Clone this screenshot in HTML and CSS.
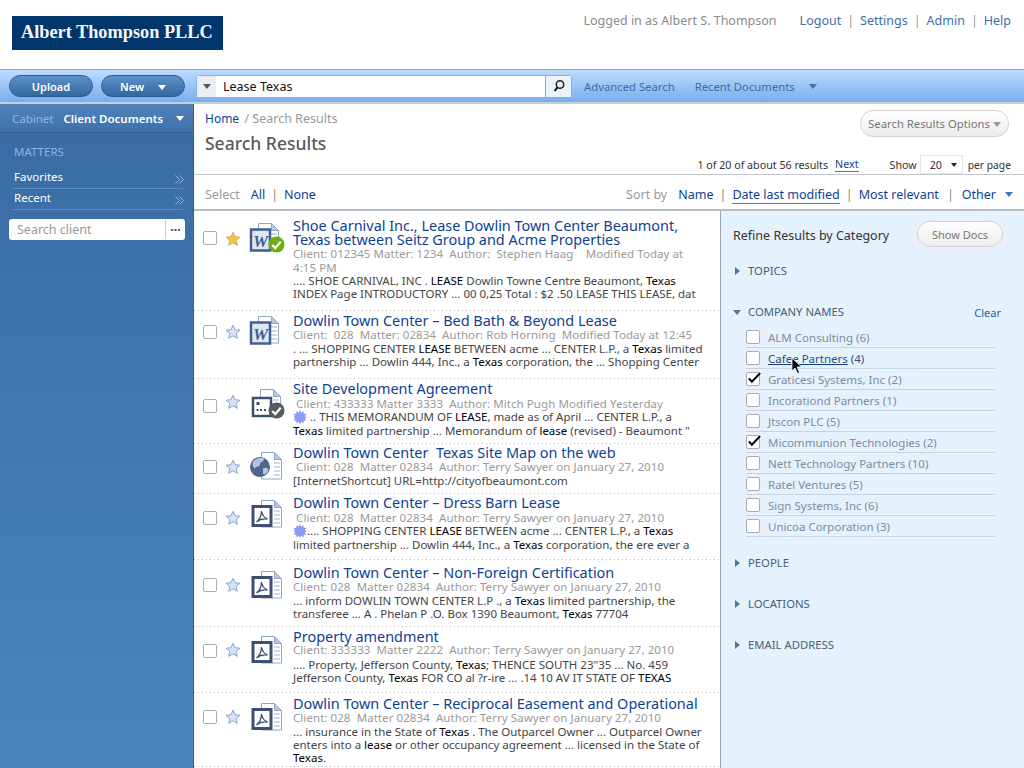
FILE: index.html
```html
<!DOCTYPE html>
<html lang="en">
<head>
<meta charset="utf-8">
<title>Search Results</title>
<link rel="stylesheet" href="styles.css">
</head>
<body>
<svg class="defs" width="0" height="0" aria-hidden="true">
  <defs>
    <symbol id="star" viewBox="0 0 16 16"><path d="M8 1.2l2 4.500 4.900.5-3.700 3.300 1.100 4.800L8 11.800l-4.300 2.500 1.100-4.800L1.100 6.200l4.900-.5z"/></symbol>
    <g id="sheet"><path d="M9.500 1.500h13l7 7v19.500h-20z" fill="#fff" stroke="#8ea8cc"/><path d="M22.500 1.500v7h7z" fill="#b9c8de" stroke="#8ea8cc"/><path d="M22 12h6M22 16h6M22 20h6M22 24h6" stroke="#9db4d4"/></g>
    <symbol id="word" viewBox="0 0 36 36"><use href="#sheet"/><rect x="2" y="7.500" width="19" height="21" fill="#dfe7f3" stroke="#3f5f92" stroke-width="2.500"/><text x="11.500" y="24.500" text-anchor="middle" class="w-letter">W</text></symbol>
    <symbol id="pdf" viewBox="0 0 36 36"><use href="#sheet" x="3"/><rect x="4" y="7.500" width="18" height="19" fill="#fff" stroke="#3d5070" stroke-width="3"/><path d="M7.500 23c2.500-2 5-6.500 5-11 .5 4 2.500 6.500 6 8-4-.5-8 .5-11 3z" fill="none" stroke="#3d5070" stroke-width="1.300"/></symbol>
    <symbol id="app" viewBox="0 0 36 36"><use href="#sheet" x="2"/><rect x="4" y="10" width="18" height="18" fill="#fff" stroke="#3d5070" stroke-width="2.500"/><path d="M7.500 14h3v3h-3zM7.500 21h2v2h-2zM11 21h2v2h-2zM15 21h2v2h-2z" fill="#3d5070"/></symbol>
    <symbol id="web" viewBox="0 0 36 36"><use href="#sheet" x="3"/><circle cx="11" cy="16" r="10" fill="#4d668d"/><path d="M4 10.500c3-3 8-5 11-3 1 3-4 3-4 6 0 3-4 1-5 4-2 0-3-4-2-7zM14 17.500c4-2 6 0 5 3-1 2-4 4-5 2z" fill="#b6c4d8"/></symbol>
    <symbol id="tick" viewBox="0 0 18 18"><circle cx="9" cy="9" r="8.500"/><path d="M4.500 9.500l3.200 3.200 5.800-6.500" fill="none" stroke="#fff" stroke-width="2.400"/></symbol>
    <symbol id="burst" viewBox="0 0 14 14"><path d="M7 0l1.300 2.700L10.500 1l.2 2.800 2.800.2-1.700 2.200L14 7l-2.200 1.300 1.700 2.200-2.800.2-.2 2.800-2.200-1.700L7 14l-1.300-2.200-2.200 1.700-.2-2.800-2.800-.2 1.700-2.200L0 7l2.200-.8L.5 4l2.800-.2.2-2.800 2.200 1.700z"/></symbol>
    <symbol id="check" viewBox="0 0 18 16"><path d="M1.500 8.500l4 4.500L16.500 1.500" fill="none" stroke="#000" stroke-width="2.800"/></symbol>
    <symbol id="dbl" viewBox="0 0 9 9"><path d="M.5 .5l4 4-4 4M4.500 .5l4 4-4 4" fill="none" stroke="#8fb6e6"/></symbol>
  </defs>
</svg>

<header class="masthead">
  <div class="logo">Albert Thompson PLLC</div>
  <nav class="usernav">
    <span class="who">Logged in as Albert S. Thompson</span>
    <a>Logout</a><i>|</i><a>Settings</a><i>|</i><a>Admin</a><i>|</i><a>Help</a>
  </nav>
</header>

<div class="toolbar">
  <button class="pill pill-upload">Upload</button>
  <button class="pill pill-new">New <b class="tri tri-white"></b></button>
  <div class="searchbox">
    <span class="sb-drop"><b class="tri tri-dark"></b></span>
    <span class="sb-text">Lease Texas</span>
    <span class="sb-go"><svg width="14" height="14" viewBox="0 0 14 14"><circle cx="8" cy="5.500" r="3.700" fill="none" stroke="#222" stroke-width="1.500"/><path d="M5.500 8.500L2.500 12" stroke="#222" stroke-width="2"/></svg></span>
  </div>
  <a class="tool-link tl-adv">Advanced Search</a>
  <a class="tool-link tl-rec">Recent Documents</a>
  <b class="tri tri-blue"></b>
</div>

<div class="body">
  <aside class="sidebar">
    <div class="cabinet"><span class="cab-l">Cabinet</span><span class="cab-v">Client Documents</span><b class="tri tri-white"></b></div>
    <h2 class="matters">MATTERS</h2>
    <div class="side-item"><span>Favorites</span><svg class="dbl"><use href="#dbl"/></svg></div>
    <div class="side-item"><span>Recent</span><svg class="dbl"><use href="#dbl"/></svg></div>
    <div class="client-search"><span class="cs-text">Search client</span><span class="cs-more">...</span></div>
  </aside>

  <main class="content">
    <div class="crumbs-area">
      <div class="crumb-col">
        <div class="crumbs"><a>Home</a> <span>/ Search Results</span></div>
        <h1>Search Results</h1>
      </div>
      <button class="ghost opts">Search Results Options <b class="tri tri-grey"></b></button>
      <div class="pager">
        <span>1 of 20 of about 56 results</span><a>Next</a>
        <span class="show">Show</span><span class="sel">20 <b class="tri tri-black"></b></span><span class="perpage">per page</span>
      </div>
    </div>
    <div class="sortbar">
      <span class="lbl">Select</span><a class="all">All</a><i>|</i><a>None</a>
      <span class="lbl sort-lbl">Sort by</span><a>Name</a><i>|</i><a class="cur">Date last modified</a><i>|</i><a>Most relevant</a><i class="wide">|</i><a>Other</a><b class="tri tri-blue"></b>
    </div>

    <div class="split">
      <section class="results">
        <article class="row r1">
          <span class="cb"></span><svg class="star gold"><use href="#star"/></svg>
          <span class="ico"><svg class="doc"><use href="#word"/></svg><svg class="badge green"><use href="#tick"/></svg></span>
          <div class="txt"><h3>Shoe Carnival Inc., Lease Dowlin Town Center Beaumont,<br>Texas between Seitz Group and Acme Properties</h3><p class="meta">Client: 012345 Matter: 1234  Author:  Stephen Haag    Modified Today at<br>4:15 PM</p><p class="snip">.... SHOE CARNIVAL, INC . <b>LEASE</b> Dowlin Towne Centre Beaumont, <b>Texas</b><br>INDEX Page INTRODUCTORY ... 00 0,25 Total : $2 .50 LEASE THIS LEASE, dat</p></div>
        </article>
        <article class="row r2">
          <span class="cb"></span><svg class="star"><use href="#star"/></svg>
          <span class="ico"><svg class="doc"><use href="#word"/></svg></span>
          <div class="txt"><h3>Dowlin Town Center – Bed Bath &amp; Beyond Lease</h3><p class="meta">Client:  028  Matter: 02834  Author: Rob Horning  Modified Today at 12:45</p><p class="snip">. ... SHOPPING CENTER <b>LEASE</b> BETWEEN acme ... CENTER L.P., a <b>Texas</b> limited<br>partnership ... Dowlin 444, Inc., a <b>Texas</b> corporation, the ... Shopping Center</p></div>
        </article>
        <article class="row r3">
          <span class="cb"></span><svg class="star"><use href="#star"/></svg>
          <span class="ico"><svg class="doc"><use href="#app"/></svg><svg class="badge grey"><use href="#tick"/></svg></span>
          <div class="txt"><h3>Site Development Agreement</h3><p class="meta low"> Client: 433333 Matter 3333  Author: Mitch Pugh Modified Yesterday</p><p class="snip"><svg class="burst"><use href="#burst"/></svg> .. THIS MEMORANDUM OF <b>LEASE</b>, made as of April ... CENTER L.P., a<br><b>Texas</b> limited partnership ... Memorandum of <b>lease</b> (revised) - Beaumont "</p></div>
        </article>
        <article class="row r4">
          <span class="cb"></span><svg class="star"><use href="#star"/></svg>
          <span class="ico"><svg class="doc"><use href="#web"/></svg></span>
          <div class="txt"><h3>Dowlin Town Center  Texas Site Map on the web</h3><p class="meta"> Client: 028  Matter 02834  Author: Terry Sawyer on January 27, 2010</p><p class="snip">[InternetShortcut] URL=http://cityofbeaumont.com</p></div>
        </article>
        <article class="row r5">
          <span class="cb"></span><svg class="star"><use href="#star"/></svg>
          <span class="ico"><svg class="doc"><use href="#pdf"/></svg></span>
          <div class="txt"><h3>Dowlin Town Center – Dress Barn Lease</h3><p class="meta low"> Client: 028  Matter 02834  Author: Terry Sawyer on January 27, 2010</p><p class="snip"><svg class="burst"><use href="#burst"/></svg>.... SHOPPING CENTER <b>LEASE</b> BETWEEN acme ... CENTER L.P., a <b>Texas</b><br>limited partnership ... Dowlin 444, Inc., a <b>Texas</b> corporation, the ere ever a</p></div>
        </article>
        <article class="row r6">
          <span class="cb"></span><svg class="star"><use href="#star"/></svg>
          <span class="ico"><svg class="doc"><use href="#pdf"/></svg></span>
          <div class="txt"><h3>Dowlin Town Center – Non-Foreign Certification</h3><p class="meta">Client: 028  Matter 02834  Author: Terry Sawyer on January 27, 2010</p><p class="snip">... inform DOWLIN TOWN CENTER L.P ., a <b>Texas</b> limited partnership, the<br>transferee ... A . Phelan P .O. Box 1390 Beaumont, <b>Texas</b> 77704</p></div>
        </article>
        <article class="row r7">
          <span class="cb"></span><svg class="star"><use href="#star"/></svg>
          <span class="ico"><svg class="doc"><use href="#pdf"/></svg></span>
          <div class="txt"><h3>Property amendment</h3><p class="meta high">Client: 333333  Matter 2222  Author: Terry Sawyer on January 27, 2010</p><p class="snip">.... Property, Jefferson County, <b>Texas</b>; THENCE SOUTH 23"35 ... No. 459<br>Jefferson County, <b>Texas</b> FOR CO al ?r-ire ... .14 10 AV IT STATE OF <b>TEXAS</b></p></div>
        </article>
        <article class="row r8">
          <span class="cb"></span><svg class="star"><use href="#star"/></svg>
          <span class="ico"><svg class="doc"><use href="#pdf"/></svg></span>
          <div class="txt"><h3>Dowlin Town Center – Reciprocal Easement and Operational</h3><p class="meta">Client: 028  Matter 02834  Author: Terry Sawyer on January 27, 2010</p><p class="snip">... insurance in the State of <b>Texas</b> . The Outparcel Owner ... Outparcel Owner<br>enters into a <b>lease</b> or other occupancy agreement ... licensed in the State of<br><b>Texas</b>.</p></div>
        </article>
      </section>

      <aside class="refine">
        <div class="refine-head"><span>Refine Results by Category</span><button class="ghost docs">Show Docs</button></div>
        <div class="facet f-topics"><b class="tri-r"></b>TOPICS</div>
        <div class="facet f-company"><b class="tri tri-slate"></b>COMPANY NAMES<a>Clear</a></div>
        <ul class="facets">
          <li><span class="cb"></span>ALM Consulting (6)</li>
          <li class="hover"><span class="cb"></span><u>Cafee Partners</u> (4)</li>
          <li><span class="cb"><svg class="chk"><use href="#check"/></svg></span>Graticesi Systems, Inc (2)</li>
          <li><span class="cb"></span>Incorationd Partners (1)</li>
          <li><span class="cb"></span>Jtscon PLC (5)</li>
          <li><span class="cb"><svg class="chk"><use href="#check"/></svg></span>Micommunion Technologies (2)</li>
          <li><span class="cb"></span>Nett Technology Partners (10)</li>
          <li><span class="cb"></span>Ratel Ventures (5)</li>
          <li><span class="cb"></span>Sign Systems, Inc (6)</li>
          <li><span class="cb"></span>Unicoa Corporation (3)</li>
        </ul>
        <div class="facet f-people"><b class="tri-r"></b>PEOPLE</div>
        <div class="facet f-more"><b class="tri-r"></b>LOCATIONS</div>
        <div class="facet f-more"><b class="tri-r"></b>EMAIL ADDRESS</div>
      </aside>
    </div>
  </main>
</div>
<svg class="cursor" width="12" height="18" viewBox="0 0 12 18"><path d="M1 1v13l3-3 2.500 5.500 2-1L6 10h4.500z" fill="#000" stroke="#fff" stroke-width=".8"/></svg>
</body>
</html>
```
FILE: styles.css
```css
* { box-sizing: border-box; }
html, body { margin: 0; height: 768px; overflow: hidden; background: #fff; }
body { font-family: "Noto Sans", "DejaVu Sans", sans-serif; font-size: 12px; color: #444; position: relative; }
.defs { position: absolute; }
h1, h2, h3, p, ul { margin: 0; padding: 0; }
i { font-style: normal; }
button { font-family: inherit; padding: 0; }

.tri { display: inline-block; width: 0; height: 0; border-left: 4.500px solid transparent; border-right: 4.500px solid transparent; border-top: 5px solid #fff; vertical-align: middle; }
.tri-white { border-top-color: #fff; }
.tri-dark { border-top-color: #555; }
.tri-blue { border-top-color: #3f73b5; }
.tri-grey { border-top-color: #999; }
.tri-black { border-top-color: #222; border-left-width: 3.500px; border-right-width: 3.500px; border-top-width: 4px; }
.tri-slate { border-top-color: #5b7290; }
.tri-r { display: inline-block; width: 0; height: 0; border-top: 4.500px solid transparent; border-bottom: 4.500px solid transparent; border-left: 5px solid #5b7290; }

.masthead { height: 69px; display: flex; justify-content: space-between; padding: 16px 13px 0 12px; }
.logo { width: 211px; height: 34px; background: #00366b; color: #f4f6f8; font: bold 18.300px/33px "Liberation Serif", serif; padding-left: 9px; white-space: nowrap; }
.usernav { font-size: 12.500px; line-height: 10px; color: #888; display: flex; gap: 6px; }
.usernav .who { margin-right: 17px; color: #8a8a8a; }
.usernav a { color: #3c6fa9; }
.usernav i { color: #999; }

.toolbar { height: 35px; display: flex; align-items: center; background: linear-gradient(#bddbfd, #78aeee); border-top: 1px solid #7da6d8; border-bottom: 2px solid #c9ced6; padding-left: 9px; }
.pill { height: 22px; border-radius: 11px; border: 1px solid #2c5c96; background: linear-gradient(#5f90c8, #33689f); color: #fff; font-weight: 600; font-size: 11px; }
.pill-upload { width: 84px; }
.pill-new { width: 84px; margin-left: 8px; }
.pill-new .tri { margin-left: 11px; }
.searchbox { width: 376px; height: 23px; margin-left: 11px; background: #fff; border: 1px solid #8eb0dc; border-radius: 3px; display: flex; align-items: center; }
.sb-drop { width: 19px; height: 21px; background: #e9eef5; display: flex; align-items: center; justify-content: center; }
.sb-text { flex: 1; padding-left: 7px; color: #111; font-size: 12.500px; line-height: 21px; }
.sb-go { width: 26px; height: 21px; background: #eaf2fc; border-left: 1px solid #9ab; display: flex; align-items: center; justify-content: center; }
.tool-link { color: #3b6ba8; font-size: 11.300px; }
.tl-adv { margin-left: 12px; }
.tl-rec { margin-left: 20px; }
.toolbar > .tri-blue { margin-left: 14px; }

.body { display: flex; height: 664px; }
.sidebar { width: 194px; background: linear-gradient(#3a6ba3, #4b84bf); border-right: 1px solid #2d5d94; color: #fff; }
.cabinet { height: 29px; padding: 0 9px 0 12px; display: flex; align-items: center; background: linear-gradient(#5083bb, #3f72a9); border-bottom: 1px solid #2f6097; font-size: 11.500px; }
.cab-l { color: #8fb6e6; margin-right: 10px; }
.cab-v { font-weight: 600; flex: 1; white-space: nowrap; }
.matters { font-size: 11.500px; font-weight: 400; color: #86b4ec; padding: 11px 0 0 14px; height: 35px; }
.side-item { margin: 0 10px 0 13px; height: 21px; border-bottom: 1px solid #5a8cc4; display: flex; justify-content: space-between; font-size: 11.500px; line-height: 17px; padding-left: 1px; }
.side-item:first-of-type { height: 22px; }
.dbl { width: 9px; height: 9px; margin: 7px -1px 0 0; }
.client-search { margin: 9px 9px 0; width: 176px; height: 21px; background: #fff; border-radius: 3px; display: flex; align-items: center; color: #999; font-size: 12.500px; }
.cs-text { flex: 1; padding-left: 8px; }
.cs-more { width: 20px; border-left: 1px solid #ccc; height: 19px; text-align: center; color: #444; line-height: 14px; font-weight: 700; }

.content { flex: 1; min-width: 0; display: flex; flex-direction: column; }
.crumbs-area { height: 71px; border-bottom: 1px solid #c3c7cc; position: relative; padding: 6px 12px 0 11px; flex: none; }
.crumbs { font-size: 12.500px; line-height: 17px; color: #999; }
.crumbs a { color: #0e3f94; font-size: 12px; margin-right: 2px; }
h1 { font-size: 17.500px; line-height: 24px; font-weight: 500; color: #5a5a5a; margin-top: 4px; }
.ghost { background: linear-gradient(#fff, #ececec); border: 1px solid #d2d2d2; border-radius: 13px; color: #777; }
.opts { position: absolute; right: 15px; top: 6px; width: 149px; height: 27px; font-size: 11.300px; }
.pager { position: absolute; right: 13px; top: 51px; display: flex; align-items: center; font-size: 10.700px; color: #333; }
.pager a { color: #0e3f94; border-bottom: 1px solid #4a78bb; line-height: 13px; margin-left: 7px; }
.pager .show { margin-left: 31px; }
.sel { margin: 0 5px 0 3px; width: 43px; height: 19px; border: 1px solid #e4e4e4; padding-left: 9px; display: flex; align-items: center; gap: 9px; }
.perpage { font-size: 10.300px; }
.sortbar { height: 36px; flex: none; border-bottom: 2px solid #b3bdc9; display: flex; align-items: center; padding: 5px 11px 0 11px; font-size: 12.500px; }
.sortbar a { color: #0e3f94; }
.sortbar i { color: #888; margin: 0 6px; }
.sortbar .wide { margin: 0 8px; }
.lbl { color: #999; }
.all { margin-left: 11px; }
.sort-lbl { margin-left: auto; margin-right: 11px; }
.cur { border-bottom: 1px solid #4a78bb; }
.sortbar .tri { margin-left: 9px; }

.split { flex: 1; display: flex; min-height: 0; }
.results { flex: 1; min-width: 0; overflow: hidden; }
.row { display: flex; position: relative; padding-left: 9px; background: repeating-linear-gradient(90deg, #b8b8b8 0 1px, transparent 1px 4px) left bottom / 100% 1px no-repeat; }
.cb { flex: none; display: block; width: 14px; height: 14px; background: #fff; border: 1px solid #a9adb3; border-radius: 2px; position: relative; }
.star { flex: none; width: 16px; height: 16px; fill: #d6e4f5; stroke: #86a6d0; stroke-width: 1; margin-left: 8px; }
.gold { fill: #f7c534; stroke: #d0ab60; }
.ico { flex: none; position: relative; width: 34px; height: 36px; margin-left: 8px; }
.doc { width: 36px; height: 36px; display: block; }
.w-letter { font: italic bold 17px "Liberation Serif", serif; fill: #3f5f92; }
.badge { position: absolute; left: 19px; top: 14px; width: 17px; height: 17px; }
.green { fill: #6fae12; }
.grey { fill: #585c60; }
.txt { margin-left: 10px; min-width: 0; }
h3, .meta, .snip { white-space: pre; }
h3 { font-size: 14.450px; line-height: 14px; font-weight: 400; color: #0e3f94; }
.meta { font-size: 11.500px; line-height: 13.500px; color: #999; letter-spacing: .07px; }
.low { position: relative; top: 1px; }
.high { position: relative; top: -1px; }
.snip { font-size: 11.500px; line-height: 13.300px; color: #444; }
.snip b { font-weight: 400; color: #000; }
.burst { width: 14px; height: 14px; fill: #8a9bf5; vertical-align: -3px; }
.r1 { height: 100px; padding-top: 8px; --cb: 12px; --st: 12px; --ic: 3px; }
.r2 { height: 68px; padding-top: 3px; --cb: 11px; --st: 10px; --ic: 1px; }
.r3 { height: 65px; padding-top: 3px; --cb: 17px; --st: 12px; --ic: 6px; }
.r4 { height: 50px; padding-top: 2px; --cb: 14px; --st: 13px; --ic: 5px; }
.r5 { height: 66px; padding-top: 2px; --cb: 15px; --st: 14px; --ic: 3px; }
.r6 { height: 67px; padding-top: 6px; --cb: 12px; --st: 11px; --ic: 4px; }
.r7 { height: 66px; padding-top: 3px; --cb: 14px; --st: 12px; --ic: 5px; }
.r8 { height: 74px; padding-top: 4px; --cb: 13px; --st: 12px; --ic: 5px; }
.row .cb { margin-top: var(--cb); }
.row .star { margin-top: var(--st); }
.row .ico { margin-top: var(--ic); }

.refine { width: 304px; flex: none; background: #e6f1fe; border-left: 1px solid #9aa6b4; padding: 12px 0 0 12px; color: #445; }
.refine-head { display: flex; align-items: center; font-size: 12.500px; color: #333; }
.refine-head span { flex: 1; white-space: nowrap; }
.docs { width: 86px; height: 26px; margin: -2px 21px 0 0; font-size: 11px; }
.facet { font-size: 11.300px; color: #4a5d78; height: 14px; line-height: 14px; display: flex; align-items: center; position: relative; }
.facet .tri { margin-right: 7px; }
.facet .tri-r { margin-left: 2px; margin-right: 8px; }
.f-topics { margin-top: 17px; }
.f-company { margin-top: 27px; }
.f-company a { position: absolute; right: 23px; top: 1px; color: #2a5da5; font-size: 11px; }
.f-people { margin-top: 19px; }
.f-more { margin-top: 27px; }
.facets { list-style: none; margin: 8px 29px 0 13px; }
.facets li { height: 21px; display: flex; align-items: center; border-bottom: 1px solid #c8d3e0; font-size: 11.500px; color: #7d8ca0; white-space: pre; }
.facets .cb { margin-right: 8px; }
.facets .hover { color: #344c70; }
.facets u { color: #344c70; text-decoration-color: #0e3f94; }
.chk { position: absolute; left: 0; top: -1px; width: 15px; height: 12px; }
.cursor { position: absolute; left: 791px; top: 357px; }
```
